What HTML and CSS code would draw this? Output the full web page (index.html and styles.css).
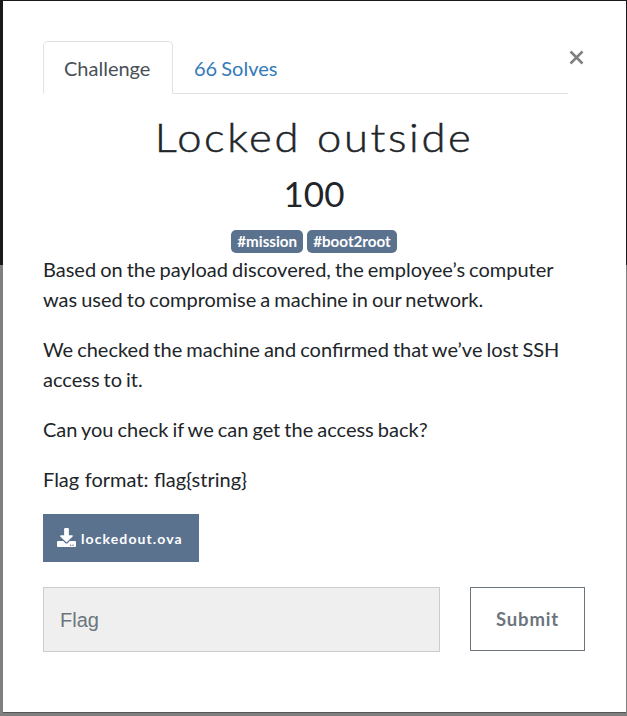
FILE: index.html
```
<!DOCTYPE html>
<html lang="en">
<head>
<meta charset="utf-8">
<title>Locked outside</title>
<link rel="stylesheet" href="styles.css">
</head>
<body>
<main class="modal">
  <header class="top">
    <nav class="tabs">
      <a class="tab active">Challenge</a>
      <a class="tab">66 Solves</a>
    </nav>
    <button class="close" aria-label="Close"><svg width="15" height="15" viewBox="0 0 15 15"><path d="M1.500 1.500L13.500 13.500M13.500 1.500L1.500 13.500" fill="none" stroke="#7f7f7f" stroke-width="2.500"/></svg></button>
  </header>
  <h2 class="title">Locked outside</h2>
  <h3 class="value">100</h3>
  <div class="tags"><span class="tag">#mission</span><span class="tag">#boot2root</span></div>
  <div class="desc">
    <p>Based on the payload discovered, the employee’s computer was used to compromise a machine in our network.</p>
    <p>We checked the machine and confirmed that we’ve lost SSH access to it.</p>
    <p>Can you check if we can get the access back?</p>
    <p class="format">Flag format: flag{string}</p>
  </div>
  <a class="file"><svg class="icon" viewBox="0 0 512 512"><path fill="currentColor" d="M216 0h80c13.300 0 24 10.700 24 24v168h87.700c17.800 0 26.700 21.500 14.100 34.100L269.700 378.300c-7.500 7.500-19.800 7.500-27.300 0L90.100 226.100c-12.600-12.600-3.700-34.100 14.100-34.100H192V24c0-13.300 10.700-24 24-24zm296 376v112c0 13.300-10.700 24-24 24H24c-13.300 0-24-10.700-24-24V376c0-13.300 10.700-24 24-24h146.700l49 49c20.100 20.100 52.500 20.100 72.600 0l49-49H488c13.300 0 24 10.700 24 24zm-124 88c0-11-9-20-20-20s-20 9-20 20 9 20 20 20 20-9 20-20zm64 0c0-11-9-20-20-20s-20 9-20 20 9 20 20 20 20-9 20-20z"/></svg><span class="file-name">lockedout.ova</span></a>
  <form class="submit-row">
    <input class="flag" type="text" placeholder="Flag">
    <button class="submit" type="button">Submit</button>
  </form>
</main>
</body>
</html>
```
FILE: styles.css
```
* { box-sizing: border-box; }
body {
  margin: 0;
  height: 716px;
  padding: 1px 1px 0 3px;
  overflow: hidden;
  background: linear-gradient(#1a181b 265px, #7f7f7f 265px);
  font: 20px/30px Lato, sans-serif;
  color: #212529;
}
.modal {
  height: 712px;
  padding: 40px 41px 0 40px;
  background: #fff;
  border-bottom: 1px solid #555;
}
.top { display: flex; justify-content: space-between; height: 53px; }
.tabs { display: flex; width: 525px; border-bottom: 1px solid #dee2e6; }
.tab { height: 53px; padding: 11px 20px; border: 1px solid transparent; color: #337ab7; word-spacing: -1px; }
.tab.active {
  width: 130px;
  color: #495057;
  background: #fff;
  border-color: #dee2e6 #dee2e6 #fff;
  border-radius: 5px 5px 0 0;
}
.close { display: flex; width: 16px; height: 15px; margin-top: 9px; padding: 0; border: 0; background: none; }
.title {
  margin: 19px 0 0;
  font-size: 40px;
  line-height: 48px;
  font-weight: 300;
  letter-spacing: 2.4px;
  word-spacing: 1.5px;
  text-align: center;
  transform: scaleX(1.088);
  -webkit-text-stroke: .5px #212529;
}
.value { margin: 11px 0 0; font-size: 35px; line-height: 42px; font-weight: 400; text-align: center; }
.tags { display: flex; justify-content: center; gap: 4px; margin-top: 16px; height: 23px; }
.tag { height: 23px; padding: 4px 6px; border-radius: 5px; background: #5b728f; color: #fff; font-size: 15.2px; line-height: 15px; font-weight: 700; }
.desc { margin-top: 1px; word-spacing: -1.1px; }
.desc p { margin: 0 0 20px; }
.desc .format { word-spacing: .4px; }
.file {
  display: flex;
  align-items: center;
  gap: 5px;
  width: 156px;
  height: 48px;
  padding-left: 14px;
  background: #5b728f;
  color: #fff;
  font-size: 14px;
  font-weight: 700;
  letter-spacing: 1.1px;
}
.file-name { padding-top: 2px; }
.icon { width: 19px; height: 19px; margin-top: -2px; }
.submit-row { display: flex; justify-content: space-between; margin-top: 25px; }
.flag {
  width: 397px;
  height: 65px;
  padding: 2px 16px 0;
  border: 1px solid #ccc;
  background: #efefef;
  font: 20px "Liberation Sans", sans-serif;
}
.flag::placeholder { color: #6c757d; opacity: 1; }
.submit {
  width: 115px;
  height: 64px;
  padding: 0;
  border: 1px solid #6c757d;
  background: #fff;
  color: #6c757d;
  font: 700 18.5px Lato, sans-serif;
  letter-spacing: .8px;
}
```
